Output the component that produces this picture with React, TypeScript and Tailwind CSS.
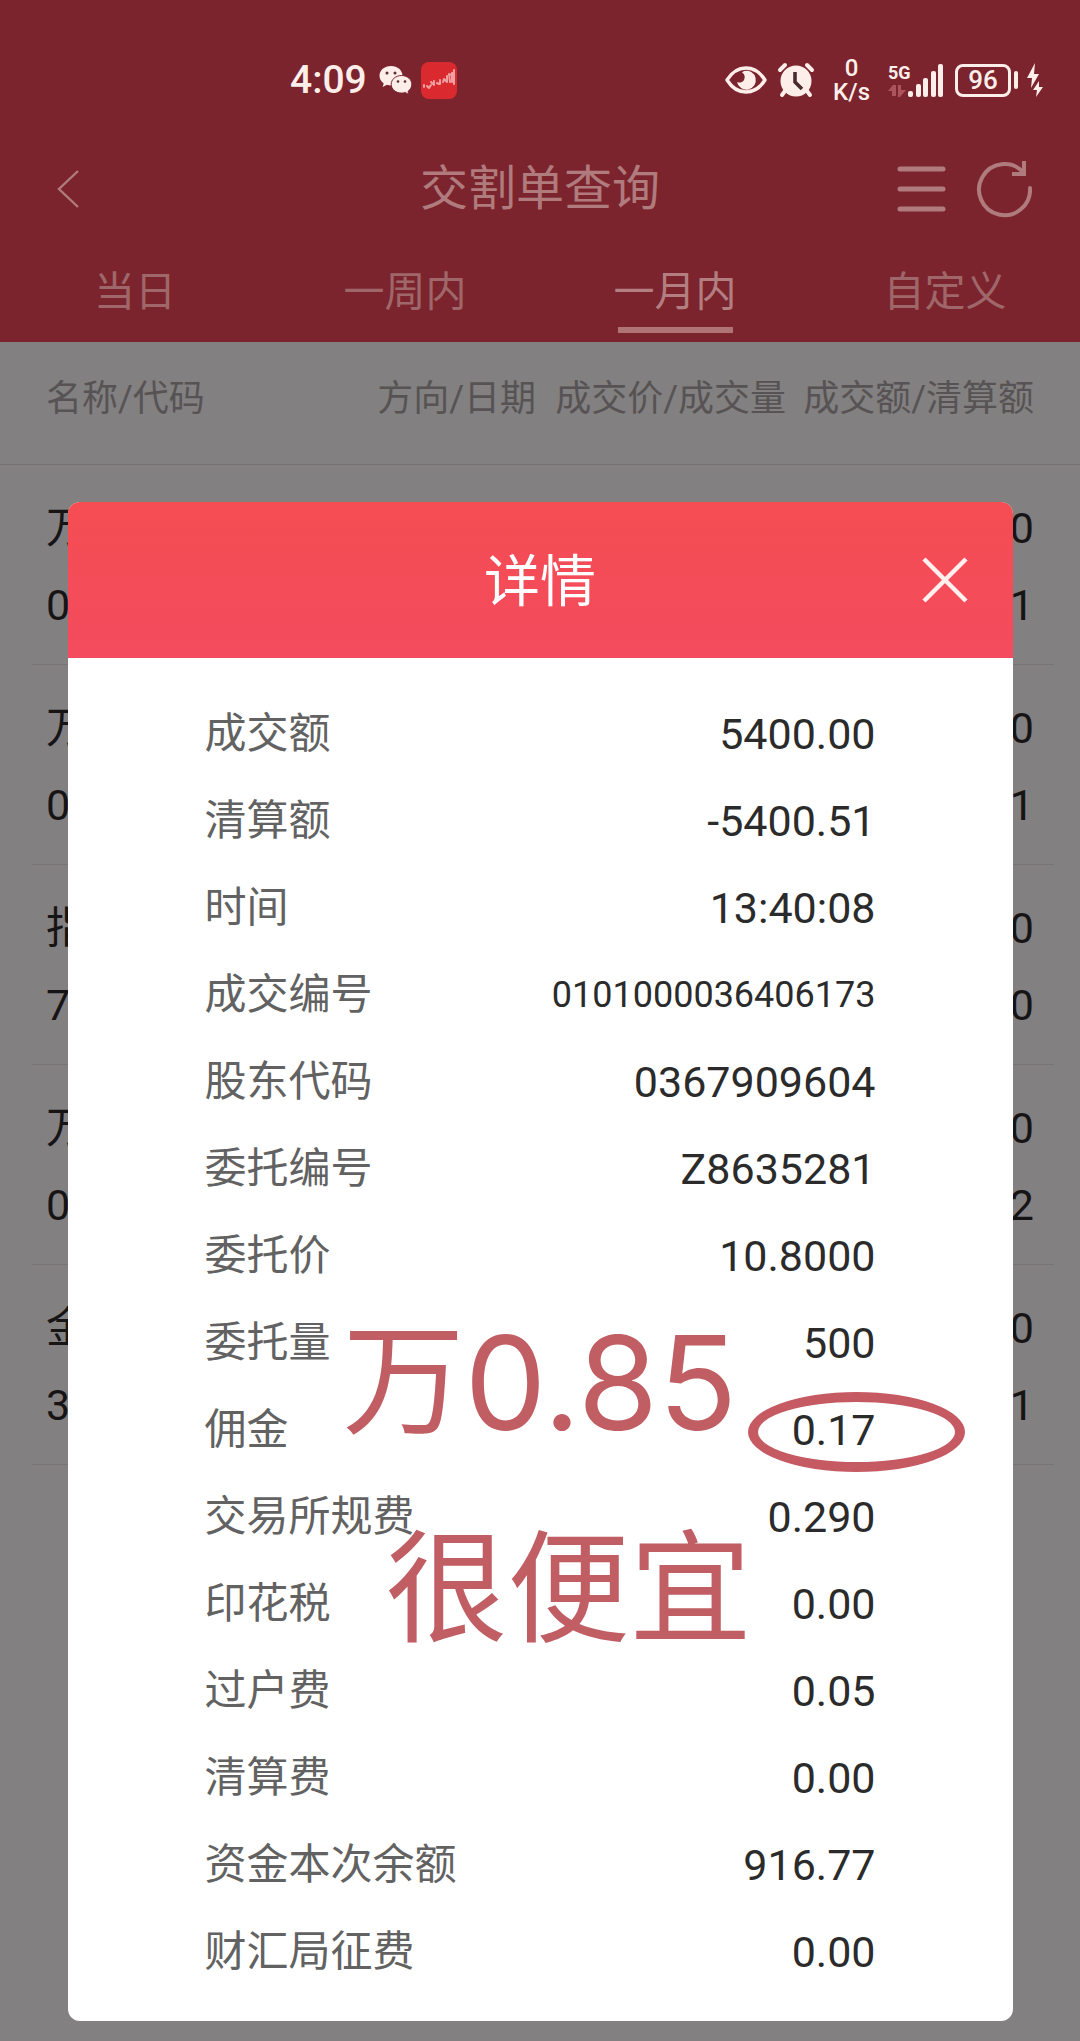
import type { ReactNode } from 'react'

interface DetailRow {
  label: string
  value: string
  small?: boolean
}

const tabs = ['当日', '一周内', '一月内', '自定义']

const records = [
  { name: '万', code: '0', amount: '0', cleared: '1' },
  { name: '万', code: '0', amount: '0', cleared: '1' },
  { name: '指', code: '7', amount: '0', cleared: '0' },
  { name: '万', code: '0', amount: '0', cleared: '2' },
  { name: '金', code: '3', amount: '0', cleared: '1' },
]

const details: DetailRow[] = [
  { label: '成交额', value: '5400.00' },
  { label: '清算额', value: '-5400.51' },
  { label: '时间', value: '13:40:08' },
  { label: '成交编号', value: '0101000036406173', small: true },
  { label: '股东代码', value: '0367909604' },
  { label: '委托编号', value: 'Z8635281' },
  { label: '委托价', value: '10.8000' },
  { label: '委托量', value: '500' },
  { label: '佣金', value: '0.17' },
  { label: '交易所规费', value: '0.290' },
  { label: '印花税', value: '0.00' },
  { label: '过户费', value: '0.05' },
  { label: '清算费', value: '0.00' },
  { label: '资金本次余额', value: '916.77' },
  { label: '财汇局征费', value: '0.00' },
]

function WechatIcon() {
  return (
    <svg width="34" height="30" viewBox="0 0 34 30" fill="#fdeeea">
      <path d="M12 1C5.400 1 .5 5.300.5 10.800c0 3.100 1.600 5.800 4.200 7.600L3.600 22l4.300-2.200c1.300.4 2.700.6 4.100.6 6.600 0 11.500-4.300 11.500-9.700S18.600 1 12 1z" />
      <path
        d="M22.500 10.500c-5.700 0-10.300 3.900-10.300 8.800s4.600 8.800 10.300 8.800c1.300 0 2.500-.2 3.700-.6l3.700 2-.9-3.200c2.300-1.600 3.800-4.100 3.800-7 0-4.900-4.600-8.800-10.300-8.800z"
        stroke="#7a242e"
        strokeWidth="1"
      />
      <g fill="#5d2a30">
        <circle cx="8" cy="8" r="1.500" />
        <circle cx="16" cy="8" r="1.500" />
        <circle cx="19" cy="16.500" r="1.300" />
        <circle cx="26" cy="16.500" r="1.300" />
      </g>
    </svg>
  )
}

function AppIcon() {
  return (
    <svg width="36" height="37" viewBox="0 0 36 37" fill="none">
      <rect width="36" height="37" rx="8" fill="#da2a30" />
      <g stroke="#f0a0a0" strokeWidth="2" strokeLinecap="round" strokeLinejoin="round">
        <path d="M3 25v-2M6 24l2 2 2-3M12 22l-2-2M13 19v4M16 21l2 1M19 18v4M22 20l1-3M26 14v6M23 17l3 3" />
        <path d="M28 12l1 8M31 11v9M33 8v14M29 13l4-3" />
      </g>
    </svg>
  )
}

function EyeIcon() {
  return (
    <svg width="42" height="28" viewBox="0 0 42 28" fill="none">
      <path d="M2 14C7 6 13 2 21 2s14 4 19 12c-5 8-11 12-19 12S7 22 2 14z" stroke="#fdeeea" strokeWidth="3.400" strokeLinejoin="round" />
      <path d="M19 5a9.500 9.500 0 1 1-7 11c2 1 5 .8 6.500-1.200C20.500 12 20 8 17 6.500z" fill="#fdeeea" />
    </svg>
  )
}

function AlarmIcon() {
  return (
    <svg width="38" height="36" viewBox="0 0 38 36" fill="none">
      <g stroke="#fdeeea" strokeWidth="4" strokeLinecap="round">
        <path d="M3 8l5-5M30 3l5 5M8 29l-3 4M30 29l3 4" />
      </g>
      <circle cx="19" cy="19" r="15.500" fill="#fdeeea" />
      <path d="M18 10v10l7 7" stroke="#4a2c2f" strokeWidth="3.600" />
    </svg>
  )
}

function NetworkStatus() {
  return (
    <div className="flex h-9 items-end">
      <div className="flex w-6 flex-col">
        <span className="text-[18px] leading-[22px] font-bold">5G</span>
        <svg width="18" height="14" viewBox="0 0 18 14" fill="#a9545f">
          <path d="M8 12H4V7H0l5-6h3zM10 1h3v5h5l-6 7h-2z" />
        </svg>
      </div>
      <svg className="-ml-1" width="36" height="36" viewBox="0 0 36 36" fill="#fdeeea">
        <rect x="0" y="29" width="5" height="6" rx="2" />
        <rect x="8" y="22" width="5" height="13" rx="2" />
        <rect x="15" y="16" width="5" height="19" rx="2" />
        <rect x="23" y="9" width="5" height="26" rx="2" />
        <rect x="30" y="2" width="5" height="33" rx="2" />
      </svg>
    </div>
  )
}

function StatusBar() {
  return (
    <div className="flex h-[120px] items-center justify-between pt-10 pr-9 pl-[290px] text-[#fdeeea]">
      <div className="flex items-center">
        <span className="text-[39px] leading-none font-medium">4:09</span>
        <span className="ml-3">
          <WechatIcon />
        </span>
        <span className="ml-2">
          <AppIcon />
        </span>
      </div>
      <div className="flex items-center">
        <EyeIcon />
        <span className="ml-[10px]">
          <AlarmIcon />
        </span>
        <div className="ml-[18px] flex flex-col items-center text-[24px] font-medium">
          <span className="leading-[24px]">0</span>
          <span className="leading-[24px]">K/s</span>
        </div>
        <span className="ml-[18px]">
          <NetworkStatus />
        </span>
        <span className="ml-[11px] flex h-[33px] w-14 items-center justify-center rounded-lg border-[3px] border-[#fdeeea] text-[26px] leading-none font-medium">
          96
        </span>
        <span className="ml-[3px] h-[18px] w-1 rounded-sm bg-[#fdeeea]" />
        <svg className="ml-2" width="18" height="36" viewBox="0 0 18 36" fill="#fdeeea">
          <path d="M9 1L1 16h5L5 26l8-14H8zM13 19l-6 9h4l-1 7 7-10h-4z" />
        </svg>
      </div>
    </div>
  )
}

function IconButton({ label, children }: { label: string; children: ReactNode }) {
  return (
    <button type="button" aria-label={label} className="block cursor-pointer">
      {children}
    </button>
  )
}

function PageHeader() {
  return (
    <header className="bg-[#7b242e]">
      <StatusBar />
      <div className="grid h-[138px] grid-cols-[1fr_auto_1fr] items-center px-12 text-[#b07b7c]">
        <div className="flex pl-2">
          <IconButton label="返回">
            <svg width="24" height="40" viewBox="0 0 24 40" fill="none" stroke="currentColor" strokeWidth="2.400">
              <path d="M22 2L3 20l19 18" />
            </svg>
          </IconButton>
        </div>
        <h1 className="text-5xl leading-none">交割单查询</h1>
        <div className="flex items-center justify-end gap-[30px]">
          <IconButton label="菜单">
            <svg width="50" height="46" viewBox="0 0 50 46" fill="none" stroke="currentColor" strokeWidth="5" strokeLinecap="round">
              <path d="M4 3h43M4 23h43M4 43h43" />
            </svg>
          </IconButton>
          <IconButton label="刷新">
            <svg width="56" height="58" viewBox="0 0 56 58" fill="none" stroke="currentColor" strokeWidth="4">
              <path d="M54 28A25.500 25.500 0 1 1 47 12" strokeLinecap="round" />
              <path d="M48 1v13H36" />
            </svg>
          </IconButton>
        </div>
      </div>
      <nav className="grid grid-cols-4">
        {tabs.map((tab) => {
          const isActive = tab === '一月内'
          return (
            <button
              key={tab}
              type="button"
              className={'flex h-[84px] cursor-pointer flex-col items-center text-[41px] ' + (isActive ? 'text-[#b37e80]' : 'text-[#9f6769]')}
            >
              <span className="leading-[68px]">{tab}</span>
              {isActive && <span className="mt-px h-[6px] w-[115px] bg-[#ae7476]" />}
            </button>
          )
        })}
      </nav>
    </header>
  )
}

function RecordTable() {
  return (
    <table className="w-full text-[43px] text-[#161415]">
      <thead>
        <tr className="border-b border-[#757172] text-4xl text-[#575354]">
          <th className="pb-2 pl-[46px] text-left leading-[114px] font-normal">名称/代码</th>
          <th className="pb-2 text-right leading-[114px] font-normal">方向/日期</th>
          <th className="w-[250px] pb-2 text-right leading-[114px] font-normal whitespace-nowrap">成交价/成交量</th>
          <th className="w-[294px] pr-[46px] pb-2 text-right leading-[114px] font-normal whitespace-nowrap">成交额/清算额</th>
        </tr>
      </thead>
      <tbody>
        {records.map((r, i) => (
          <tr key={i}>
            <td className="pl-8">
              <div className="h-[200px] border-b border-[#787475] pt-[25px] pl-[14px] leading-[77px]">
                <p>{r.name}</p>
                <p>{r.code}</p>
              </div>
            </td>
            <td colSpan={3} className="pr-[26px]">
              <div className="h-[200px] border-b border-[#787475] pt-[25px] pr-5 text-right leading-[77px]">
                <p>{r.amount}</p>
                <p>{r.cleared}</p>
              </div>
            </td>
          </tr>
        ))}
      </tbody>
    </table>
  )
}

function DetailDialog() {
  return (
    <section role="dialog" aria-label="详情" className="relative mx-auto w-[87.5%] overflow-hidden rounded-xl bg-white">
      <div className="grid h-[156px] grid-cols-[1fr_auto_1fr] items-center bg-linear-to-b from-[#f54d52] to-[#f44b5e] px-[45px] text-white">
        <span />
        <h2 className="pt-1 text-[56px] leading-[80px]">详情</h2>
        <div className="flex justify-end">
          <IconButton label="关闭">
            <svg width="46" height="46" viewBox="0 0 46 46" fill="none" stroke="#fff0f0" strokeWidth="4.500">
              <path d="M2 2l42 42M44 2L2 44" />
            </svg>
          </IconButton>
        </div>
      </div>
      <div className="px-[137px] pt-8 pb-[26px]">
        <table className="w-full">
          <tbody>
            {details.map((row) => (
              <tr key={row.label} className="h-[87px]">
                <th scope="row" className="text-left text-[42px] leading-[60px] font-normal text-[#626262]">
                  {row.label}
                </th>
                <td className={'text-right leading-[60px] text-[#2b2b2b] ' + (row.small ? 'text-4xl' : 'text-[43px]')}>
                  {row.value}
                </td>
              </tr>
            ))}
          </tbody>
        </table>
      </div>

      {/* handwritten style marks on top of the sheet */}
      <div className="pointer-events-none absolute top-[806px] left-[275px] flex items-start leading-[150px] text-[#c05e63]">
        <span className="text-[122px]">万</span>
        <span className="font-['Inter'] text-[130px]">0.85</span>
      </div>
      <p className="pointer-events-none absolute top-[1014px] left-[318px] text-[122px] leading-[150px] text-[#c05e63]">很便宜</p>
      <span className="pointer-events-none absolute top-[890px] right-12 h-[80px] w-[217px] rounded-[50%] border-[10px] border-[#c65a62]" />
    </section>
  )
}

export default function App() {
  return (
    <div className="grid min-h-screen bg-[#828080] font-['Roboto','Noto_Sans_CJK_SC',sans-serif]">
      <main className="col-start-1 row-start-1">
        <PageHeader />
        <RecordTable />
      </main>
      <div className="z-10 col-start-1 row-start-1 pt-[502px] pb-5">
        <DetailDialog />
      </div>
    </div>
  )
}
